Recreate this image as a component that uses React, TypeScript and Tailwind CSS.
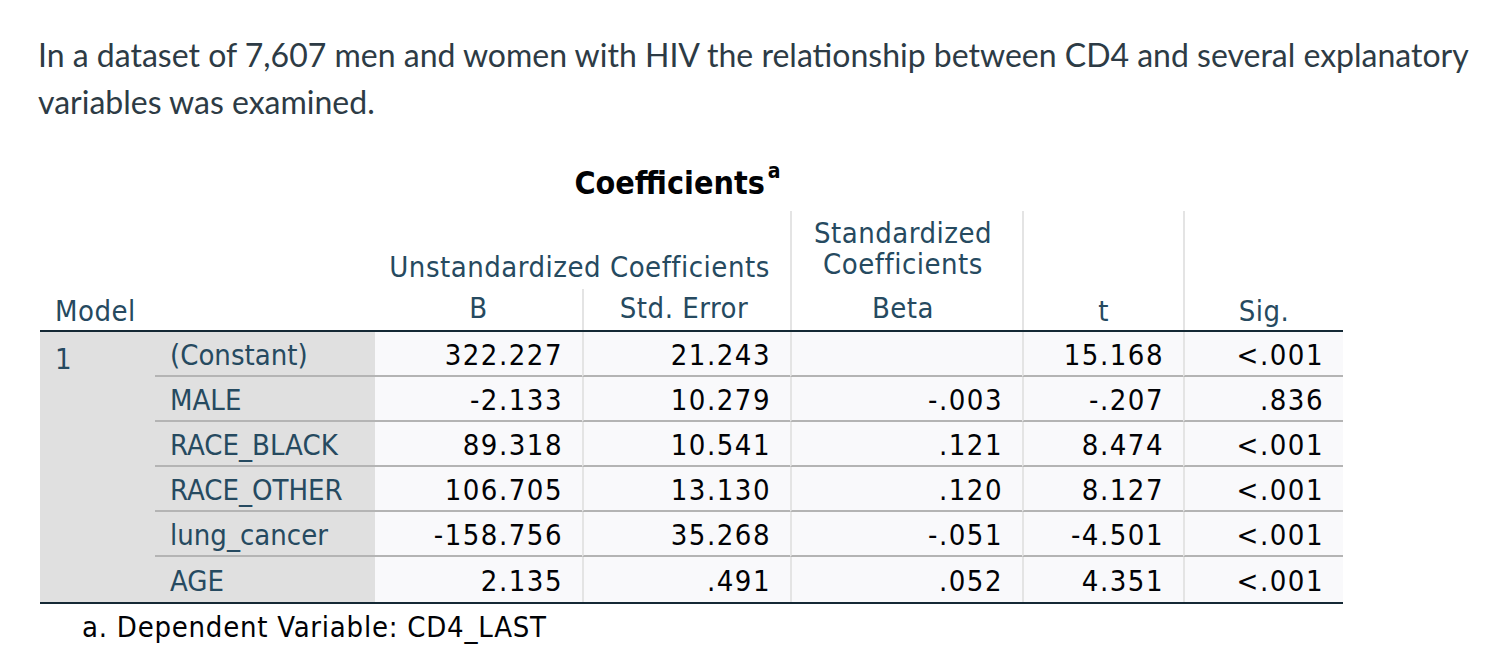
const rows = [
  { name: "(Constant)", b: "322.227", se: "21.243", beta: "", t: "15.168", sig: "<.001" },
  { name: "MALE", b: "-2.133", se: "10.279", beta: "-.003", t: "-.207", sig: ".836" },
  { name: "RACE_BLACK", b: "89.318", se: "10.541", beta: ".121", t: "8.474", sig: "<.001" },
  { name: "RACE_OTHER", b: "106.705", se: "13.130", beta: ".120", t: "8.127", sig: "<.001" },
  { name: "lung_cancer", b: "-158.756", se: "35.268", beta: "-.051", t: "-4.501", sig: "<.001" },
  { name: "AGE", b: "2.135", se: ".491", beta: ".052", t: "4.351", sig: "<.001" },
];

const spss = "font-['DejaVu_Sans_Condensed','DejaVu_Sans',sans-serif] font-stretch-condensed";
const cols = "grid grid-cols-[115px_220px_207px_208px_232px_161px_160px]";

function Num({ value, last, divider }: { value: string; last: boolean; divider?: boolean }) {
  return (
    <div
      className={`flex h-[45px] items-center justify-end bg-[#f9f9fb] pr-[19px] pt-[4px] text-[29px] tracking-[1.5px] text-[#010205] ${
        last ? "" : "border-b-2 border-b-[#b4b4b4]"
      } ${divider ? "border-l-2 border-l-[#e4e4e4]" : ""}`}
    >
      {value}
    </div>
  );
}

export default function App() {
  return (
    <div className="h-[670px] w-full overflow-hidden bg-white">
      {/* intro paragraph */}
      <p className="pl-[38px] pr-[4px] pt-[31px] font-['Lato',sans-serif] text-[32px] leading-[47px] text-[#2d3b45]">
        <span className="whitespace-nowrap">
          In a dataset of 7,607 men and women with HIV the relationship between CD4 and several explanatory
        </span>
        <br />
        variables was examined.
      </p>

      {/* SPSS output table */}
      <div className={`ml-[40px] mt-[36px] w-[1303px] ${spss}`}>
        <div className="flex h-[40px] justify-center">
          <div className="mr-[28px] h-[40px] text-[32px] font-bold leading-[40px] text-[#010205]">
            Coefficients
            <span className="ml-[3px] align-[16px] text-[21px] leading-none">a</span>
          </div>
        </div>

        {/* header */}
        <div className={`${cols} mt-[10px] grid-rows-[78px_41px] text-[29px] leading-[32px] tracking-[0.5px] text-[#264a60]`}>
          <div className="col-span-2 row-span-2 flex items-end pb-[3px] pl-[15px]">Model</div>
          <div className="col-span-2 flex items-end justify-center pb-[6px] pr-[6px]">Unstandardized Coefficients</div>
          <div className="flex flex-col items-center justify-end border-l-2 border-l-[#e4e4e4] pb-[9px] pr-[8px] leading-[31px]">
            <span>Standardized</span>
            <span>Coefficients</span>
          </div>
          <div className="row-span-2 flex items-end justify-center border-l-2 border-l-[#e4e4e4] pb-[3px]">t</div>
          <div className="row-span-2 flex items-end justify-center border-l-2 border-l-[#e4e4e4] pb-[3px]">Sig.</div>
          <div className="col-start-3 row-start-2 flex items-end justify-center pb-[6px]">B</div>
          <div className="col-start-4 row-start-2 flex items-end justify-center border-l-2 border-l-[#e4e4e4] pb-[6px] pr-[6px]">
            Std. Error
          </div>
          <div className="col-start-5 row-start-2 flex items-end justify-center border-l-2 border-l-[#e4e4e4] pb-[6px] pr-[8px]">
            Beta
          </div>
        </div>
        <div className="h-[2px] bg-[#152935]" />

        {/* body */}
        <div className={cols}>
          <div className="row-span-6 bg-[#e0e0e0] pl-[15px] pt-[11px] text-[29px] leading-[32px] text-[#264a60]">1</div>
          {rows.map((r, i) => {
            const last = i === rows.length - 1;
            return (
              <div key={r.name} className="col-span-6 grid grid-cols-subgrid">
                <div
                  className={`flex h-[45px] items-center bg-[#e0e0e0] pl-[15px] pt-[4px] text-[29px] text-[#264a60] ${
                    last ? "" : "border-b-2 border-b-[#b4b4b4]"
                  }`}
                >
                  {r.name}
                </div>
                <Num value={r.b} last={last} />
                <Num value={r.se} last={last} divider />
                <Num value={r.beta} last={last} divider />
                <Num value={r.t} last={last} divider />
                <Num value={r.sig} last={last} divider />
              </div>
            );
          })}
        </div>
        <div className="h-[2px] bg-[#152935]" />

        <div className="mt-[7px] pl-[42px] text-[29px] leading-[32px] tracking-[0.75px] text-[#010205]">
          a. Dependent Variable: CD4_LAST
        </div>
      </div>
    </div>
  );
}
